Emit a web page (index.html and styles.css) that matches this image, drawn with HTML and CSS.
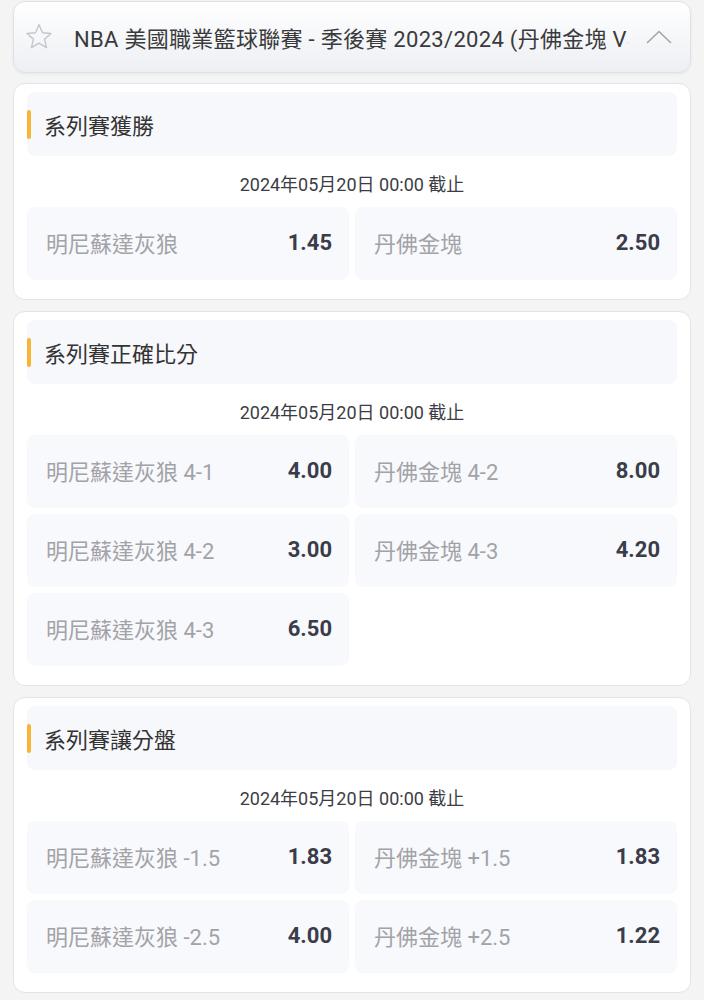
FILE: index.html
```html
<!DOCTYPE html>
<html lang="zh-Hant">
<head>
    <meta charset="UTF-8">
    <meta name="viewport" content="width=device-width, initial-scale=1.0">
    <title>NBA 季後賽</title>
    <link rel="stylesheet" href="styles.css">
</head>
<body>
    <!-- Event header -->
    <div class="event-header">
        <svg class="star" viewBox="0 0 28 28" width="30" height="30">
            <path d="M14 2.5 L17.3 10 L25.2 10.7 L19.2 16 L21 23.9 L14 19.7 L7 23.9 L8.8 16 L2.8 10.7 L10.7 10 Z" fill="none" stroke="#c4c6cc" stroke-width="1.3" stroke-linejoin="round"/>
        </svg>
        <div class="event-title">NBA 美國職業籃球聯賽 - 季後賽 2023/2024 (丹佛金塊 VS 明尼蘇達灰狼)</div>
        <svg class="chevron" viewBox="0 0 26 14" width="26" height="14">
            <path d="M1.5 12.5 L13 1.5 L24.5 12.5" fill="none" stroke="#a3a6ad" stroke-width="1.6" stroke-linecap="round" stroke-linejoin="round"/>
        </svg>
    </div>

    <!-- Series winner -->
    <div class="market">
        <div class="market-title"><span class="bar"></span>系列賽獲勝</div>
        <div class="deadline">2024年05月20日 00:00 截止</div>
        <div class="options">
            <div class="option"><span class="label">明尼蘇達灰狼</span><span class="odds">1.45</span></div>
            <div class="option"><span class="label">丹佛金塊</span><span class="odds">2.50</span></div>
        </div>
    </div>

    <!-- Correct series score -->
    <div class="market">
        <div class="market-title"><span class="bar"></span>系列賽正確比分</div>
        <div class="deadline">2024年05月20日 00:00 截止</div>
        <div class="options">
            <div class="option"><span class="label">明尼蘇達灰狼 4-1</span><span class="odds">4.00</span></div>
            <div class="option"><span class="label">丹佛金塊 4-2</span><span class="odds">8.00</span></div>
            <div class="option"><span class="label">明尼蘇達灰狼 4-2</span><span class="odds">3.00</span></div>
            <div class="option"><span class="label">丹佛金塊 4-3</span><span class="odds">4.20</span></div>
            <div class="option"><span class="label">明尼蘇達灰狼 4-3</span><span class="odds">6.50</span></div>
        </div>
    </div>

    <!-- Series handicap -->
    <div class="market">
        <div class="market-title"><span class="bar"></span>系列賽讓分盤</div>
        <div class="deadline">2024年05月20日 00:00 截止</div>
        <div class="options">
            <div class="option"><span class="label">明尼蘇達灰狼 -1.5</span><span class="odds">1.83</span></div>
            <div class="option"><span class="label">丹佛金塊 +1.5</span><span class="odds">1.83</span></div>
            <div class="option"><span class="label">明尼蘇達灰狼 -2.5</span><span class="odds">4.00</span></div>
            <div class="option"><span class="label">丹佛金塊 +2.5</span><span class="odds">1.22</span></div>
        </div>
    </div>
</body>
</html>
```

FILE: styles.css
```css
body {
    margin: 0;
    padding: 1px 13px 20px;
    background-color: #f4f4f5;
    font-family: Roboto, "Noto Sans CJK TC", sans-serif;
    color: #333;
}
.event-header {
    display: flex;
    align-items: center;
    height: 72px;
    box-sizing: border-box;
    padding: 0 18px 0 10px;
    margin-bottom: 10px;
    border: 1px solid #dde1e8;
    border-radius: 12px;
    background: linear-gradient(#ffffff, #edeff3);
    box-shadow: 0 1px 3px rgba(0, 0, 0, 0.06);
}
.star {
    flex: none;
    margin-right: 20px;
}
.event-title {
    flex: 1;
    min-width: 0;
    overflow: hidden;
    white-space: nowrap;
    font-size: 22px;
    letter-spacing: 0.3px;
    color: #3a3a3c;
}
.chevron {
    flex: none;
    margin-left: 18px;
}
.market {
    background-color: #fff;
    border: 1px solid #e1e4ea;
    border-radius: 12px;
    padding: 8px 13px 19px;
    margin-bottom: 11px;
}
.market-title {
    display: flex;
    align-items: center;
    height: 64px;
    background-color: #f7f8fc;
    border-radius: 8px;
    font-size: 22px;
    color: #333;
}
.bar {
    width: 4px;
    height: 29px;
    margin-right: 13px;
    border-radius: 2px;
    background-color: #f6b537;
}
.deadline {
    padding: 16px 0 10px;
    line-height: 25px;
    text-align: center;
    font-size: 18px;
    color: #3b3d44;
}
.options {
    display: grid;
    grid-template-columns: 1fr 1fr;
    gap: 6px;
}
.option {
    display: flex;
    align-items: center;
    justify-content: space-between;
    height: 73px;
    box-sizing: border-box;
    padding: 0 17px 3px 19px;
    background-color: #f8f9fd;
    border-radius: 8px;
}
.label {
    font-size: 22px;
    color: #a2a3a7;
}
.odds {
    font-size: 22px;
    font-weight: bold;
    color: #3a3d49;
}
```
